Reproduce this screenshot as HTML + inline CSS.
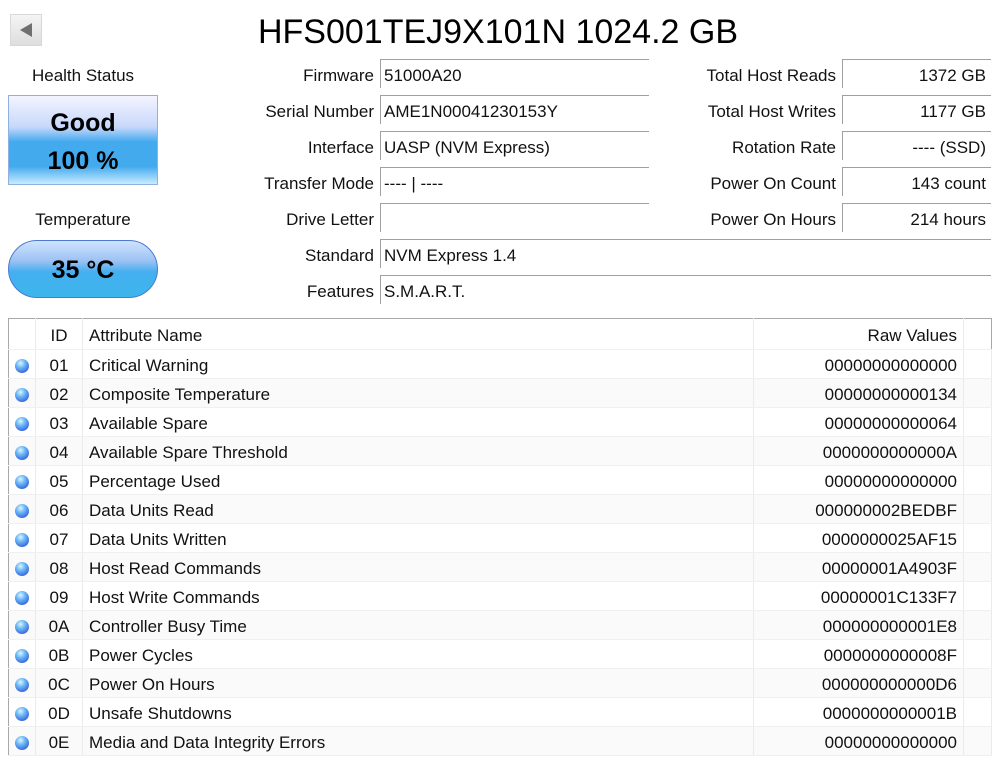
<!DOCTYPE html>
<html><head><meta charset="utf-8"><style>
*{margin:0;padding:0;box-sizing:border-box}
body{width:996px;height:759px;background:#fff;font-family:"Liberation Sans",sans-serif;color:#111;position:relative;overflow:hidden;font-size:17px}
.a{position:absolute;white-space:nowrap}
.lbl{position:absolute;text-align:right;white-space:nowrap}
.box{position:absolute;height:29px;border-top:1px solid #a0a0a0;border-left:1px solid #a0a0a0;padding:5px 3px 0;white-space:nowrap;line-height:22px}
.r{text-align:right;padding-right:5px}
table{position:absolute;left:8px;top:318px;width:984px;border-collapse:collapse;border:1px solid #a8a8a8;border-bottom:none}
td{height:29px;font-size:17px;white-space:nowrap;border-right:1px solid #ebebeb;border-bottom:1px solid #f0f0f0;padding:3px 6px 0}
tr:nth-child(odd) td{background:#fafafa}
tr.h td{background:#fff;height:31px}
.dot{display:inline-block;width:14px;height:14px;border-radius:50%;background:radial-gradient(circle at 40% 30%,#dff4ff 0,#6ab8f5 35%,#3d6be0 75%,#3650b8 100%);vertical-align:middle;position:relative;top:0}
</style></head><body>
<div class="a" style="left:10px;top:14px;width:32px;height:32px;background:linear-gradient(#f4f4f4,#dedede);border:1px solid #d8d8d8"><div style="position:absolute;left:9px;top:8px;width:0;height:0;border-top:7px solid transparent;border-bottom:7px solid transparent;border-right:12px solid #707070"></div></div>
<div class="a" style="left:0;width:996px;text-align:center;top:12px;font-size:34px;line-height:40px;color:#000">HFS001TEJ9X101N 1024.2 GB</div>

<div class="a" style="left:8px;width:150px;text-align:center;top:66px">Health Status</div>
<div class="a" style="left:8px;top:95px;width:150px;height:90px;border:1px solid #8fb0e0;background:linear-gradient(#f4f4ff 0%,#c8d8fb 35%,#44aaee 52%,#44aaee 80%,#c8ecff 100%);text-align:center;font-weight:bold;font-size:25px;line-height:38px;padding-top:8px;color:#000">Good<br>100 %</div>
<div class="a" style="left:8px;width:150px;text-align:center;top:210px">Temperature</div>
<div class="a" style="left:8px;top:240px;width:150px;height:58px;border:1px solid #4a7ad0;border-radius:29px;background:linear-gradient(#cfe4ff 0%,#9dc2f3 35%,#45aff0 55%,#3cb6ec 100%);text-align:center;font-weight:bold;font-size:25px;line-height:58px;color:#000">35 °C</div>

<div class="lbl" style="right:622px;top:66px">Firmware</div>
<div class="lbl" style="right:622px;top:102px">Serial Number</div>
<div class="lbl" style="right:622px;top:138px">Interface</div>
<div class="lbl" style="right:622px;top:174px">Transfer Mode</div>
<div class="lbl" style="right:622px;top:210px">Drive Letter</div>
<div class="lbl" style="right:622px;top:246px">Standard</div>
<div class="lbl" style="right:622px;top:282px">Features</div>
<div class="box" style="left:380px;top:59px;width:269px">51000A20</div>
<div class="box" style="left:380px;top:95px;width:269px">AME1N00041230153Y</div>
<div class="box" style="left:380px;top:131px;width:269px">UASP (NVM Express)</div>
<div class="box" style="left:380px;top:167px;width:269px">---- | ----</div>
<div class="box" style="left:380px;top:203px;width:269px"></div>
<div class="box" style="left:380px;top:239px;width:611px">NVM Express 1.4</div>
<div class="box" style="left:380px;top:275px;width:611px">S.M.A.R.T.</div>

<div class="lbl" style="right:160px;top:66px">Total Host Reads</div>
<div class="lbl" style="right:160px;top:102px">Total Host Writes</div>
<div class="lbl" style="right:160px;top:138px">Rotation Rate</div>
<div class="lbl" style="right:160px;top:174px">Power On Count</div>
<div class="lbl" style="right:160px;top:210px">Power On Hours</div>
<div class="box r" style="left:842px;top:59px;width:149px">1372 GB</div>
<div class="box r" style="left:842px;top:95px;width:149px">1177 GB</div>
<div class="box r" style="left:842px;top:131px;width:149px">---- (SSD)</div>
<div class="box r" style="left:842px;top:167px;width:149px">143 count</div>
<div class="box r" style="left:842px;top:203px;width:149px">214 hours</div>

<table>
<colgroup><col style="width:27px"><col style="width:47px"><col style="width:671px"><col style="width:210px"><col></colgroup>
<tr class="h"><td></td><td style="text-align:center">ID</td><td>Attribute Name</td><td style="text-align:right">Raw Values</td><td style="border-right:none"></td></tr>
<tr><td><span class="dot"></span></td><td style="text-align:center">01</td><td>Critical Warning</td><td style="text-align:right">00000000000000</td><td></td></tr>
<tr><td><span class="dot"></span></td><td style="text-align:center">02</td><td>Composite Temperature</td><td style="text-align:right">00000000000134</td><td></td></tr>
<tr><td><span class="dot"></span></td><td style="text-align:center">03</td><td>Available Spare</td><td style="text-align:right">00000000000064</td><td></td></tr>
<tr><td><span class="dot"></span></td><td style="text-align:center">04</td><td>Available Spare Threshold</td><td style="text-align:right">0000000000000A</td><td></td></tr>
<tr><td><span class="dot"></span></td><td style="text-align:center">05</td><td>Percentage Used</td><td style="text-align:right">00000000000000</td><td></td></tr>
<tr><td><span class="dot"></span></td><td style="text-align:center">06</td><td>Data Units Read</td><td style="text-align:right">000000002BEDBF</td><td></td></tr>
<tr><td><span class="dot"></span></td><td style="text-align:center">07</td><td>Data Units Written</td><td style="text-align:right">0000000025AF15</td><td></td></tr>
<tr><td><span class="dot"></span></td><td style="text-align:center">08</td><td>Host Read Commands</td><td style="text-align:right">00000001A4903F</td><td></td></tr>
<tr><td><span class="dot"></span></td><td style="text-align:center">09</td><td>Host Write Commands</td><td style="text-align:right">00000001C133F7</td><td></td></tr>
<tr><td><span class="dot"></span></td><td style="text-align:center">0A</td><td>Controller Busy Time</td><td style="text-align:right">000000000001E8</td><td></td></tr>
<tr><td><span class="dot"></span></td><td style="text-align:center">0B</td><td>Power Cycles</td><td style="text-align:right">0000000000008F</td><td></td></tr>
<tr><td><span class="dot"></span></td><td style="text-align:center">0C</td><td>Power On Hours</td><td style="text-align:right">000000000000D6</td><td></td></tr>
<tr><td><span class="dot"></span></td><td style="text-align:center">0D</td><td>Unsafe Shutdowns</td><td style="text-align:right">0000000000001B</td><td></td></tr>
<tr><td><span class="dot"></span></td><td style="text-align:center">0E</td><td>Media and Data Integrity Errors</td><td style="text-align:right">00000000000000</td><td></td></tr>
</table>
</body></html>
